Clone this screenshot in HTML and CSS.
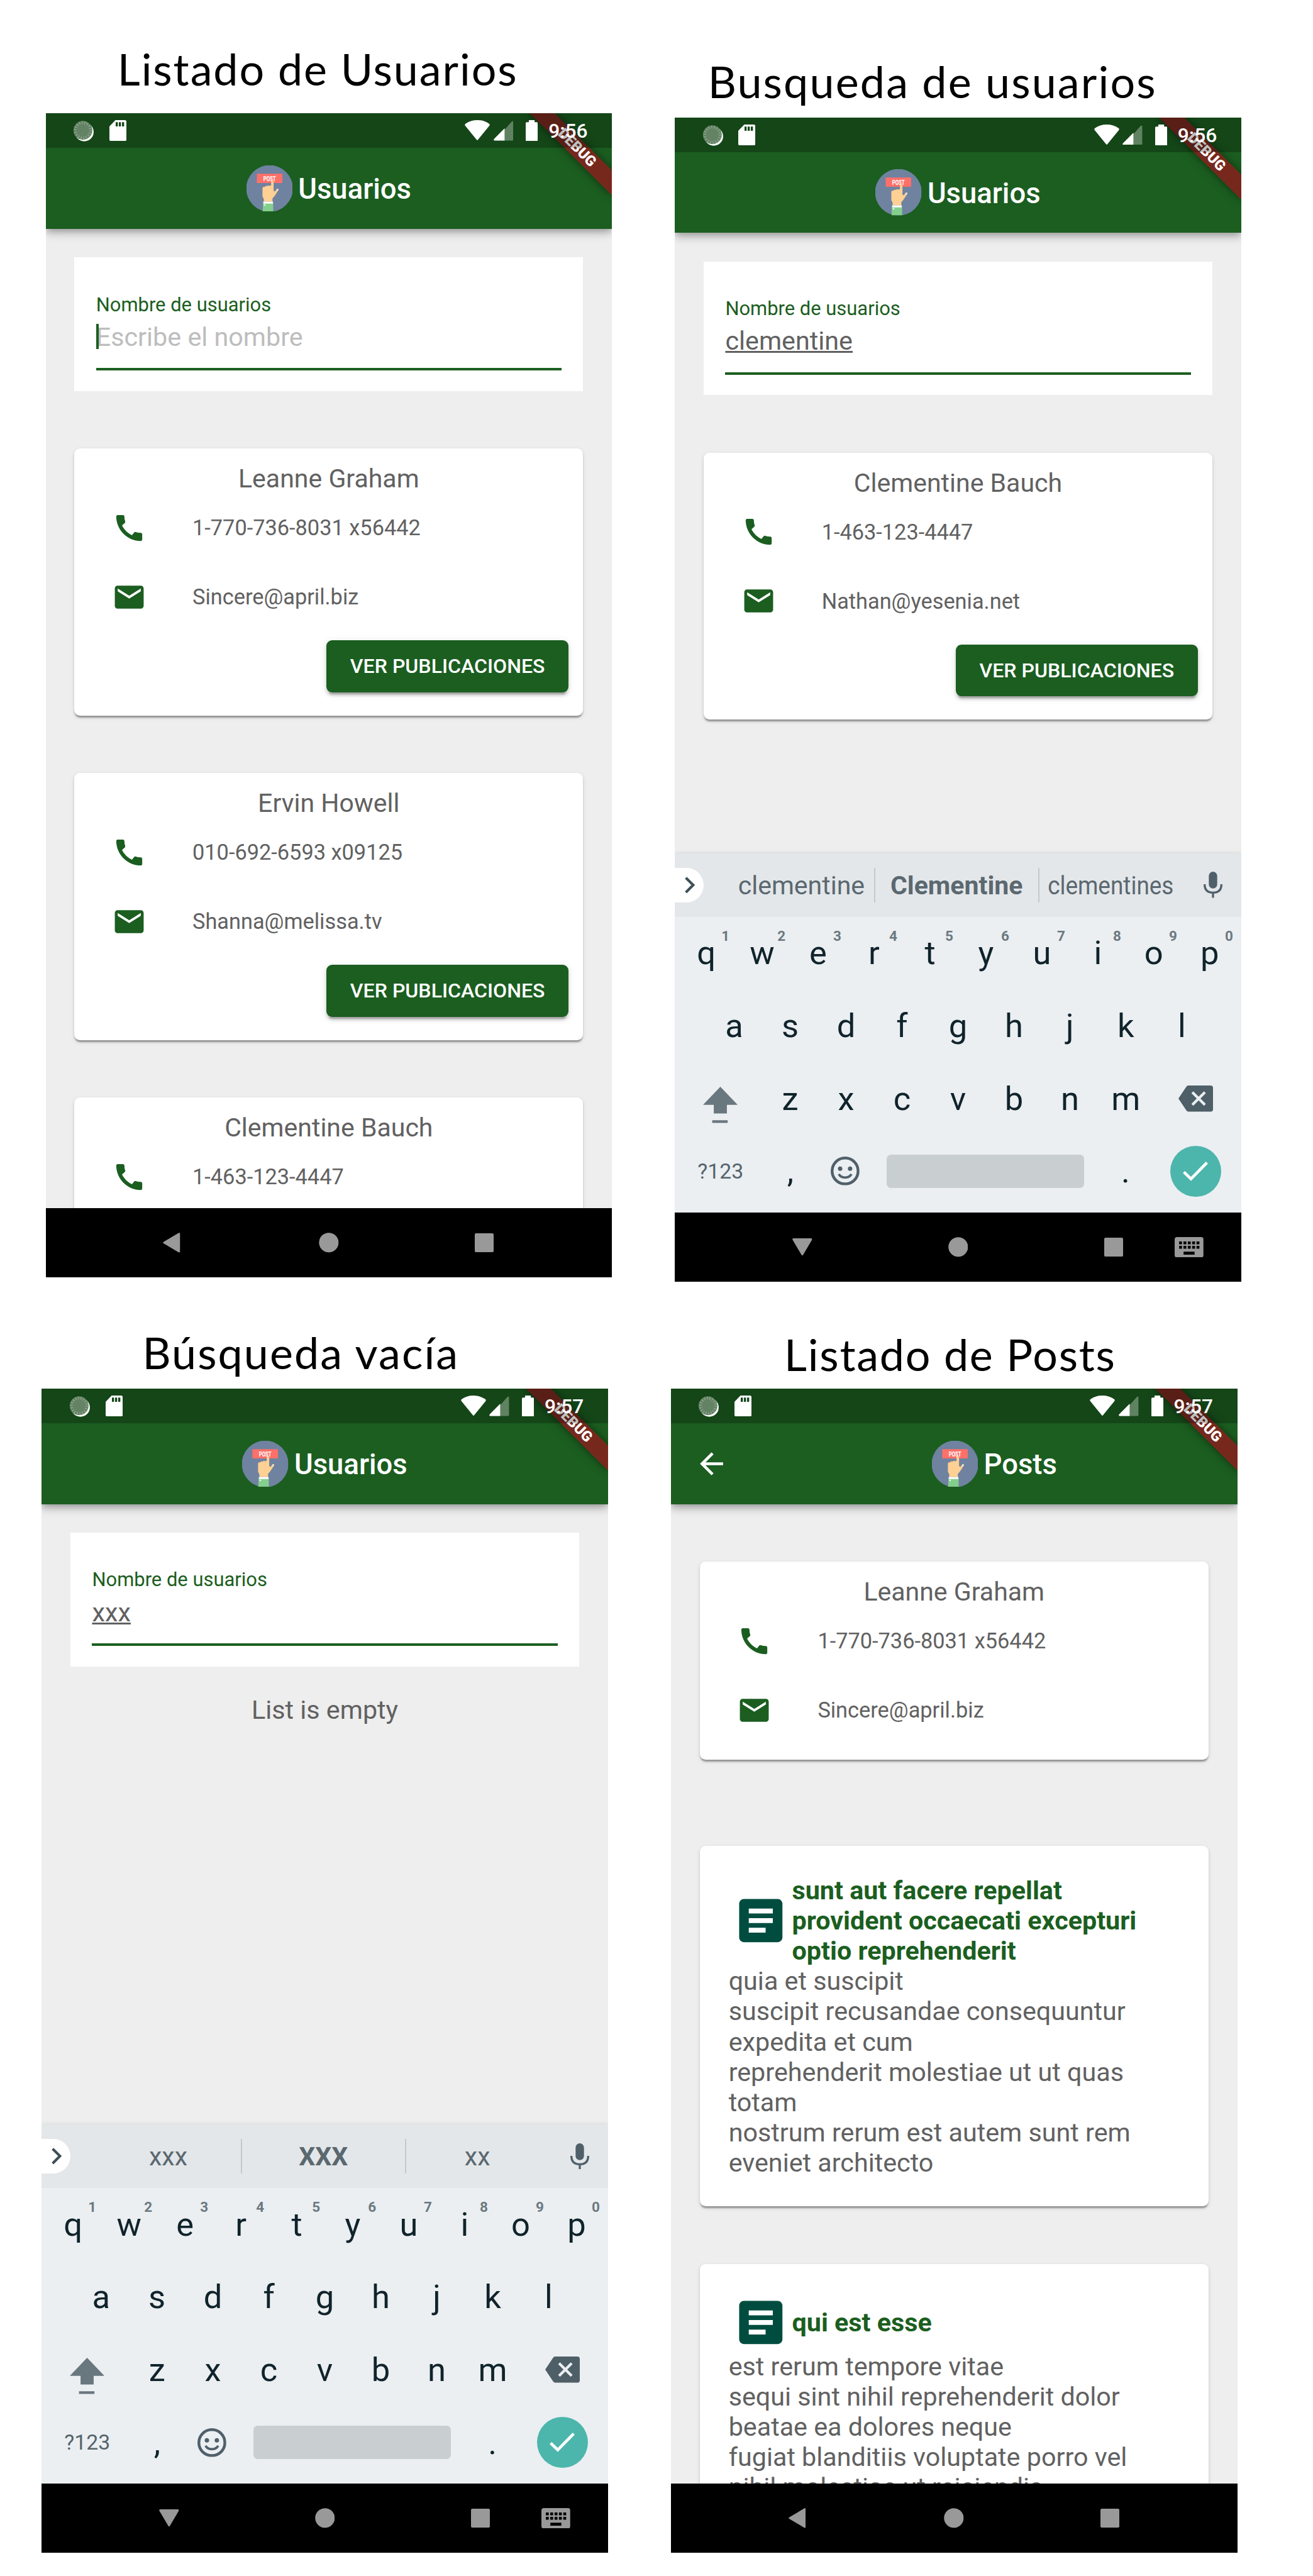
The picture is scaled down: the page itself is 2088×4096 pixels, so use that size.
FILE: index.html
```html
<!DOCTYPE html>
<html lang="es">
<head>
<meta charset="utf-8">
<title>Usuarios y Posts</title>
<link rel="stylesheet" href="styles.css">
</head>
<body>
<svg class="sprite" aria-hidden="true">
  <symbol id="i-sync" viewBox="0 0 40 42">
    <circle cx="21.5" cy="22.5" r="18" fill="#fff"/>
    <circle cx="19" cy="19.500" r="18" fill="#648264"/>
    <circle cx="19" cy="19.500" r="14.500" fill="none" stroke="#93aa93" stroke-width="5" stroke-dasharray="1.600 3.460"/>
  </symbol>
  <symbol id="i-sd" viewBox="0 0 32.500 40"><path fill="#fff" fill-rule="evenodd" d="M11.500 0H29.500Q32.500 0 32.500 3V37Q32.500 40 29.500 40H3Q0 40 0 37V12ZM12 4V12H16V4ZM18 4V12H22V4ZM24 4V12H28V4Z"/></symbol>
  <symbol id="i-wifi" viewBox="0 0 48 38.500"><path fill="#fff" d="M.8 10.500Q-.4 8.500 1.500 7Q11 0 24 0T46.500 7Q48.400 8.500 47.200 10.500L25.200 37.500Q24 39 22.800 37.500Z"/></symbol>
  <symbol id="i-signal" viewBox="0 0 38 38"><path fill="#5f8260" d="M21 17L34 2Q38-1 38 3V35.500Q38 38 35.500 38H21Z"/><path fill="#fff" d="M21 14.500V38H2Q-1 37.500 1 34.500Z"/></symbol>
  <symbol id="i-battery" viewBox="0 0 23 40"><path fill="#fff" d="M6 0H17V4H21Q23 4 23 6V38Q23 40 21 40H2Q0 40 0 38V6Q0 4 2 4H6Z"/></symbol>
  <symbol id="i-logo" viewBox="0 0 88 88">
    <circle cx="44" cy="44" r="44.500" fill="#6f82a0"/>
    <rect x="19.700" y="16" width="48.600" height="17.700" rx="1" fill="#ff7069"/>
    <text x="44" y="30" class="logo-text" text-anchor="middle" textLength="24" lengthAdjust="spacingAndGlyphs">POST</text>
    <path fill="#ffd093" d="M47 31Q49.300 26 51.700 31V48L54 50 58 45Q61 43.500 60.800 47L53.500 58.500 49.500 63V69H33V64L30.500 59.500V43Q32 39.500 34.500 41.500 36.500 37.500 39 40 41 36.500 43.500 39L47 38Z"/>
    <path fill="#f7ece0" d="M57.500 45.500Q60.500 43 61 46.500L59.500 49Z"/>
    <path fill="#84cf8e" d="M31.500 72H51V88H31Z"/>
    <rect x="32" y="69" width="18.500" height="3.800" fill="#fff"/>
    <circle cx="34.600" cy="75.500" r="1.700" fill="#e6f7e8"/>
  </symbol>
  <symbol id="i-back" viewBox="0 0 24 24"><path fill="#fff" d="M20 11H7.830l5.590-5.590L12 4l-8 8 8 8 1.410-1.410L7.830 13H20v-2z"/></symbol>
  <symbol id="i-phone" viewBox="0 0 24 24"><path fill="#1b5e20" d="M20.010 15.380c-1.230 0-2.420-.2-3.530-.56-.35-.12-.74-.03-1.010.24l-1.570 1.970c-2.830-1.350-5.480-3.900-6.890-6.830l1.950-1.660c.27-.28.350-.67.240-1.020-.37-1.110-.56-2.300-.56-3.530 0-.54-.45-.99-.99-.99H4.190C3.650 3 3 3.240 3 3.990 3 13.280 10.730 21 20.010 21c.71 0 .99-.63.99-1.180v-3.450c0-.54-.45-.99-.99-.99z"/></symbol>
  <symbol id="i-mail" viewBox="0 0 24 24"><path fill="#1b5e20" d="M20 4H4c-1.100 0-1.990.9-1.990 2L2 18c0 1.100.9 2 2 2h16c1.100 0 2-.9 2-2V6c0-1.100-.9-2-2-2zm0 4l-8 5-8-5V6l8 5 8-5v2z"/></symbol>
  <symbol id="i-article" viewBox="0 0 24 24"><path fill="#004d40" d="M19 3H5c-1.100 0-2 .9-2 2v14c0 1.100.9 2 2 2h14c1.100 0 2-.9 2-2V5c0-1.100-.9-2-2-2zm-5 14H7v-2h7v2zm3-4H7v-2h10v2zm0-4H7V7h10v2z"/></symbol>
  <symbol id="i-chevron" viewBox="0 0 20 32"><path fill="none" stroke="#3f4f57" stroke-width="5" d="M2 2L16 16 2 30"/></symbol>
  <symbol id="i-mic" viewBox="0 0 36 50"><rect x="10" y="0" width="16" height="32" rx="8" fill="#50606a"/><path fill="none" stroke="#50606a" stroke-width="4" d="M2 24Q2 40 18 40T34 24M18 40V50"/></symbol>
  <symbol id="i-shift" viewBox="0 0 66 70"><path fill="#69777e" d="M33 0L66 34.500H45.500V51H20.500V34.500H0ZM17.500 64H47V69H17.500Z"/></symbol>
  <symbol id="i-del" viewBox="0 0 66 50"><path fill="#4f5f68" d="M19 0H61Q66 0 66 5V45Q66 50 61 50H19Q16.500 50 15 47.500L0 25 15 2.500Q16.500 0 19 0Z"/><path stroke="#ebeff2" stroke-width="5" d="M26.500 13L50.500 37M50.500 13L26.500 37"/></symbol>
  <symbol id="i-smile" viewBox="0 0 55 55"><circle cx="27.500" cy="27.500" r="24.800" fill="none" stroke="#50606a" stroke-width="5.400"/><circle cx="18" cy="23" r="4.200" fill="#50606a"/><circle cx="37" cy="23" r="4.200" fill="#50606a"/><path fill="none" stroke="#50606a" stroke-width="4.600" d="M15.500 33.500Q19 40 27.500 40T39.500 33.500"/></symbol>
  <symbol id="i-check" viewBox="0 0 48 38"><path fill="none" stroke="#fff" stroke-width="5.500" d="M2 20L15.500 33 46 2"/></symbol>
  <symbol id="n-back" viewBox="0 0 33 38"><path fill="#999" d="M30 .6Q33-.8 33 3V35Q33 38.800 30 37.400L1.200 20.400Q-.6 19 1.200 17.600Z"/></symbol>
  <symbol id="n-down" viewBox="0 0 38 33"><path fill="#999" d="M.6 3Q-.8 0 3 0H35Q38.800 0 37.400 3L20.400 31.800Q19 33.600 17.600 31.800Z"/></symbol>
  <symbol id="n-home" viewBox="0 0 38 38"><circle cx="19" cy="19" r="18.700" fill="#999"/></symbol>
  <symbol id="n-recent" viewBox="0 0 36 36"><rect width="36" height="36" rx="2.500" fill="#999"/></symbol>
  <symbol id="n-kbd" viewBox="0 0 55 39"><rect width="55" height="39" rx="4.500" fill="#999"/><path stroke="#000" stroke-width="5.500" stroke-dasharray="5.500 2.800" d="M8.500 11H47.500M8.500 19.500H47.500"/><path fill="#000" d="M17 28H38V33.500H17Z"/></symbol>
</svg>

<main class="board">
  <section class="row row-top">
    <figure class="shot">
      <figcaption class="cap cap-1">Listado de Usuarios</figcaption>
      <div class="phone">
        <div class="appbar">
          <div class="title"><svg class="logo"><use href="#i-logo"/></svg><span>Usuarios</span></div>
        </div>
        <div class="debug">DEBUG</div>
        <div class="status">
          <svg class="s-sync"><use href="#i-sync"/></svg><svg class="s-sd"><use href="#i-sd"/></svg>
          <svg class="s-wifi"><use href="#i-wifi"/></svg><svg class="s-signal"><use href="#i-signal"/></svg><svg class="s-battery"><use href="#i-battery"/></svg><span class="clock">9:56</span>
        </div>
        <div class="content">
          <div class="search">
            <div class="label">Nombre de usuarios</div>
            <div class="input hint"><i class="cursor"></i>Escribe el nombre</div>
          </div>
          <div class="card">
            <h2>Leanne Graham</h2>
            <div class="item"><svg><use href="#i-phone"/></svg>1-770-736-8031 x56442</div>
            <div class="item"><svg><use href="#i-mail"/></svg>Sincere@april.biz</div>
            <div class="actions"><button>VER PUBLICACIONES</button></div>
          </div>
          <div class="card">
            <h2>Ervin Howell</h2>
            <div class="item"><svg><use href="#i-phone"/></svg>010-692-6593 x09125</div>
            <div class="item"><svg><use href="#i-mail"/></svg>Shanna@melissa.tv</div>
            <div class="actions"><button>VER PUBLICACIONES</button></div>
          </div>
          <div class="card">
            <h2>Clementine Bauch</h2>
            <div class="item"><svg><use href="#i-phone"/></svg>1-463-123-4447</div>
          </div>
        </div>
        <nav class="navbar"><svg class="n-back"><use href="#n-back"/></svg><svg class="n-home"><use href="#n-home"/></svg><svg class="n-recent"><use href="#n-recent"/></svg></nav>
      </div>
    </figure>

    <figure class="shot">
      <figcaption class="cap cap-2">Busqueda de usuarios</figcaption>
      <div class="phone">
        <div class="appbar">
          <div class="title"><svg class="logo"><use href="#i-logo"/></svg><span>Usuarios</span></div>
        </div>
        <div class="debug">DEBUG</div>
        <div class="status">
          <svg class="s-sync"><use href="#i-sync"/></svg><svg class="s-sd"><use href="#i-sd"/></svg>
          <svg class="s-wifi"><use href="#i-wifi"/></svg><svg class="s-signal"><use href="#i-signal"/></svg><svg class="s-battery"><use href="#i-battery"/></svg><span class="clock">9:56</span>
        </div>
        <div class="content">
          <div class="search">
            <div class="label">Nombre de usuarios</div>
            <div class="input"><u>clementine</u></div>
          </div>
          <div class="card">
            <h2>Clementine Bauch</h2>
            <div class="item"><svg><use href="#i-phone"/></svg>1-463-123-4447</div>
            <div class="item"><svg><use href="#i-mail"/></svg>Nathan@yesenia.net</div>
            <div class="actions"><button>VER PUBLICACIONES</button></div>
          </div>
        </div>
        <div class="keyboard">
          <div class="suggest">
            <div class="expand"><svg><use href="#i-chevron"/></svg></div>
            <span class="sug sug-a">clementine</span><b class="sug sug-b">Clementine</b><span class="sug sug-c"><span class="tight">clementines</span></span>
            <svg class="mic"><use href="#i-mic"/></svg>
          </div>
          <div class="keys">
            <div class="krow"><span>q<sup>1</sup></span><span>w<sup>2</sup></span><span>e<sup>3</sup></span><span>r<sup>4</sup></span><span>t<sup>5</sup></span><span>y<sup>6</sup></span><span>u<sup>7</sup></span><span>i<sup>8</sup></span><span>o<sup>9</sup></span><span>p<sup>0</sup></span></div>
            <div class="krow"><span>a</span><span>s</span><span>d</span><span>f</span><span>g</span><span>h</span><span>j</span><span>k</span><span>l</span></div>
            <div class="krow"><span class="wide"><svg class="shift"><use href="#i-shift"/></svg></span><span>z</span><span>x</span><span>c</span><span>v</span><span>b</span><span>n</span><span>m</span><span class="wide"><svg class="del"><use href="#i-del"/></svg></span></div>
            <div class="krow"><span class="wide sym">?123</span><span>,</span><span><svg class="smile"><use href="#i-smile"/></svg></span><span class="space"></span><span>.</span><span class="wide"><i class="enter"><svg><use href="#i-check"/></svg></i></span></div>
          </div>
        </div>
        <nav class="navbar"><svg class="n-down"><use href="#n-down"/></svg><svg class="n-home"><use href="#n-home"/></svg><svg class="n-recent"><use href="#n-recent"/></svg><svg class="n-kbd"><use href="#n-kbd"/></svg></nav>
      </div>
    </figure>
  </section>

  <section class="row row-bottom">
    <figure class="shot">
      <figcaption class="cap cap-3">Búsqueda vacía</figcaption>
      <div class="phone">
        <div class="appbar">
          <div class="title"><svg class="logo"><use href="#i-logo"/></svg><span>Usuarios</span></div>
        </div>
        <div class="debug">DEBUG</div>
        <div class="status">
          <svg class="s-sync"><use href="#i-sync"/></svg><svg class="s-sd"><use href="#i-sd"/></svg>
          <svg class="s-wifi"><use href="#i-wifi"/></svg><svg class="s-signal"><use href="#i-signal"/></svg><svg class="s-battery"><use href="#i-battery"/></svg><span class="clock">9:57</span>
        </div>
        <div class="content">
          <div class="search">
            <div class="label">Nombre de usuarios</div>
            <div class="input"><u>xxx</u></div>
          </div>
          <p class="empty">List is empty</p>
        </div>
        <div class="keyboard">
          <div class="suggest">
            <div class="expand"><svg><use href="#i-chevron"/></svg></div>
            <span class="sug sug-a">xxx</span><b class="sug sug-b">XXX</b><span class="sug sug-c">xx</span>
            <svg class="mic"><use href="#i-mic"/></svg>
          </div>
          <div class="keys">
            <div class="krow"><span>q<sup>1</sup></span><span>w<sup>2</sup></span><span>e<sup>3</sup></span><span>r<sup>4</sup></span><span>t<sup>5</sup></span><span>y<sup>6</sup></span><span>u<sup>7</sup></span><span>i<sup>8</sup></span><span>o<sup>9</sup></span><span>p<sup>0</sup></span></div>
            <div class="krow"><span>a</span><span>s</span><span>d</span><span>f</span><span>g</span><span>h</span><span>j</span><span>k</span><span>l</span></div>
            <div class="krow"><span class="wide"><svg class="shift"><use href="#i-shift"/></svg></span><span>z</span><span>x</span><span>c</span><span>v</span><span>b</span><span>n</span><span>m</span><span class="wide"><svg class="del"><use href="#i-del"/></svg></span></div>
            <div class="krow"><span class="wide sym">?123</span><span>,</span><span><svg class="smile"><use href="#i-smile"/></svg></span><span class="space"></span><span>.</span><span class="wide"><i class="enter"><svg><use href="#i-check"/></svg></i></span></div>
          </div>
        </div>
        <nav class="navbar"><svg class="n-down"><use href="#n-down"/></svg><svg class="n-home"><use href="#n-home"/></svg><svg class="n-recent"><use href="#n-recent"/></svg><svg class="n-kbd"><use href="#n-kbd"/></svg></nav>
      </div>
    </figure>

    <figure class="shot">
      <figcaption class="cap cap-4">Listado de Posts</figcaption>
      <div class="phone">
        <div class="appbar">
          <svg class="back"><use href="#i-back"/></svg>
          <div class="title"><svg class="logo"><use href="#i-logo"/></svg><span>Posts</span></div>
        </div>
        <div class="debug">DEBUG</div>
        <div class="status">
          <svg class="s-sync"><use href="#i-sync"/></svg><svg class="s-sd"><use href="#i-sd"/></svg>
          <svg class="s-wifi"><use href="#i-wifi"/></svg><svg class="s-signal"><use href="#i-signal"/></svg><svg class="s-battery"><use href="#i-battery"/></svg><span class="clock">9:57</span>
        </div>
        <div class="content posts">
          <div class="card profile">
            <h2>Leanne Graham</h2>
            <div class="item"><svg><use href="#i-phone"/></svg>1-770-736-8031 x56442</div>
            <div class="item"><svg><use href="#i-mail"/></svg>Sincere@april.biz</div>
          </div>
          <article class="card post">
            <header><svg><use href="#i-article"/></svg><h3>sunt aut facere repellat<br>provident occaecati excepturi<br>optio reprehenderit</h3></header>
            <p>quia et suscipit<br>suscipit recusandae consequuntur<br>expedita et cum<br>reprehenderit molestiae ut ut quas<br>totam<br>nostrum rerum est autem sunt rem<br>eveniet architecto</p>
          </article>
          <article class="card post">
            <header><svg><use href="#i-article"/></svg><h3>qui est esse</h3></header>
            <p>est rerum tempore vitae<br>sequi sint nihil reprehenderit dolor<br>beatae ea dolores neque<br>fugiat blanditiis voluptate porro vel<br>nihil molestiae ut reiciendis</p>
          </article>
        </div>
        <nav class="navbar"><svg class="n-back"><use href="#n-back"/></svg><svg class="n-home"><use href="#n-home"/></svg><svg class="n-recent"><use href="#n-recent"/></svg></nav>
      </div>
    </figure>
  </section>
</main>
</body>
</html>
```
FILE: styles.css
```css
/* 1rem = ten device pixels of the captured phones (1080 x 2220) */
html { font-size: 8.3387px; }
body { margin: 0; background: #fff; font-family: Roboto, "Noto Sans", sans-serif; overflow: hidden; }
svg { display: block; flex: none; }
.sprite { display: none; }
figure, h2, h3, p { margin: 0; font-weight: 400; }

.board { width: 250.4rem; height: 491.2rem; overflow: hidden; }
.row { display: flex; align-items: flex-start; gap: 12rem; }
.row-top { height: 244.4rem; padding-left: 8.7rem; }
.row-bottom { padding-left: 7.95rem; }
.shot { width: 108rem; }

.cap { box-sizing: border-box; color: #000; font: 8.4rem/10rem Lato, Carlito, sans-serif; white-space: nowrap; }
.cap-1 { height: 21.6rem; padding: 8.13rem 0 0 13.7rem; letter-spacing: .23rem; }
.cap-2 { height: 22.4rem; padding: 10.57rem 0 0 6.3rem; letter-spacing: .26rem; }
.cap-3 { height: 20.4rem; padding: 8.55rem 0 0 19.2rem; letter-spacing: .25rem; }
.cap-4 { height: 20.4rem; padding: 8.83rem 0 0 21.6rem; letter-spacing: .21rem; }

.phone { position: relative; display: flex; flex-direction: column; width: 108rem; height: 222rem; overflow: hidden; background: #eee; }

/* app bar, debug ribbon and the translucent status bar over both */
.appbar { flex: none; z-index: 1; box-sizing: border-box; display: flex; align-items: center; height: 22rem; padding-top: 6.6rem; background: #1b5e20; box-shadow: 0 .55rem 1.1rem -.27rem rgba(0,0,0,.2), 0 1.1rem 1.37rem rgba(0,0,0,.14), 0 .27rem 2.75rem rgba(0,0,0,.12); }
.back { width: 6.6rem; height: 6.6rem; margin: 0 4.4rem; }
.title { flex: 1; display: flex; justify-content: center; align-items: center; gap: 1.1rem; color: #fff; font-size: 5.45rem; line-height: 6.4rem; font-weight: 500; }
.title span { padding-top: .4rem; }
.logo { width: 8.8rem; height: 8.8rem; }
.logo-text { fill: #fff; font: 700 13px Roboto, sans-serif; }
.debug { position: absolute; z-index: 2; top: 7.7rem; left: 97rem; width: 22rem; height: 3.3rem; transform-origin: 11rem -7.7rem; transform: rotate(45deg); background: rgba(140,28,28,.82); box-shadow: 0 0 1.65rem rgba(0,0,0,.5); color: #fff; font-size: 2.8rem; line-height: 3.3rem; font-weight: 900; text-align: center; }
.status { position: absolute; z-index: 3; inset: 0 0 auto 0; box-sizing: border-box; display: flex; height: 6.6rem; padding: 1.29rem 4.4rem 0 5.2rem; background: rgba(0,0,0,.25); }
.s-sync { width: 4rem; height: 4.2rem; }
.s-sd { width: 3.25rem; height: 4rem; margin-left: 2.95rem; }
.s-wifi { width: 4.8rem; height: 3.85rem; margin-left: auto; }
.s-signal { width: 3.8rem; height: 3.8rem; margin: .15rem 0 0 .7rem; }
.s-battery { width: 2.3rem; height: 4rem; margin-left: 2.4rem; }
.clock { width: 7.7rem; margin-left: 2rem; color: #fff; font-size: 3.8rem; line-height: 4.2rem; font-weight: 500; white-space: nowrap; }

.content { flex: 1; min-height: 0; overflow: hidden; display: flex; flex-direction: column; gap: 11rem; padding: 5.5rem 5.5rem 0; }
.posts { padding-top: 11rem; }
.search { flex: none; box-sizing: border-box; height: 25.44rem; padding: 6.85rem 4.12rem 0; background: #fff; }
.label { color: #1b5e20; font-size: 3.71rem; line-height: 4.4rem; }
.input { position: relative; box-sizing: border-box; height: 10.3rem; padding-top: 1rem; border-bottom: .55rem solid #1b5e20; color: #616161; font-size: 4.95rem; line-height: 5.8rem; }
.input.hint { color: #bdbdbd; }
.input u { text-decoration-thickness: .3rem; text-underline-offset: .25rem; }
.cursor { position: absolute; left: 0; top: 1.4rem; width: .55rem; height: 4.8rem; background: #1b5e20; }

.card { flex: none; box-sizing: border-box; height: 50.88rem; border-radius: 1.1rem; background: #fff; color: #616161; box-shadow: 0 .55rem .27rem -.27rem rgba(0,0,0,.2), 0 .27rem .27rem rgba(0,0,0,.14), 0 .27rem .8rem rgba(0,0,0,.12); }
.card h2 { box-sizing: border-box; height: 8.5rem; padding-top: 3rem; font-size: 4.92rem; line-height: 5.75rem; text-align: center; }
.item { display: flex; align-items: center; gap: 8.75rem; height: 13.2rem; padding-left: 7.15rem; font-size: 4.12rem; }
.item svg { width: 6.6rem; height: 6.6rem; }
.actions { display: flex; justify-content: flex-end; padding: 1.65rem 2.75rem 0; }
button { width: 46.2rem; height: 9.9rem; padding: 0; border: 0; border-radius: 1.1rem; background: #1b5e20; color: #fff; font: 500 3.85rem Roboto, sans-serif; box-shadow: 0 .82rem .27rem -.55rem rgba(0,0,0,.2), 0 .55rem .55rem rgba(0,0,0,.14), 0 .27rem 1.37rem rgba(0,0,0,.12); }
.profile { height: 37.7rem; margin-bottom: 5.5rem; }
.post { height: auto; padding: 5.6rem 5.5rem 5.4rem; font-size: 4.95rem; line-height: 5.775rem; white-space: nowrap; }
.post header { display: flex; align-items: center; gap: .5rem; }
.post header svg { width: 11rem; height: 11rem; margin-left: .6rem; }
.post h3 { color: #1b5e20; font-size: 4.95rem; font-weight: 700; }
.empty { margin-top: -5.5rem; font-size: 4.95rem; line-height: 5.8rem; color: #616161; text-align: center; }

.keyboard { flex: none; height: 68.5rem; display: flex; flex-direction: column; background: #ebeff2; box-shadow: 0 0 .8rem rgba(0,0,0,.12); }
.suggest { position: relative; display: flex; align-items: center; height: 12.1rem; background: #e3e7ea; color: #5b686f; font-size: 4.92rem; }
.expand { display: flex; align-items: center; justify-content: flex-end; box-sizing: border-box; width: 5.5rem; height: 6.6rem; padding-right: 1.6rem; border-radius: 0 3.3rem 3.3rem 0; background: #fff; }
.expand svg { width: 2rem; height: 3.2rem; }
.sug { display: flex; justify-content: center; align-items: center; height: 6.6rem; box-sizing: border-box; padding-top: .2rem; white-space: nowrap; }
.sug-a { width: 32.7rem; padding-left: 4.8rem; border-right: .3rem solid #c4c9cc; }
.sug-b { width: 31.3rem; border-right: .3rem solid #c4c9cc; }
.sug-c { width: 27.2rem; }
.tight { transform: scaleX(.9); }
.mic { width: 3.6rem; height: 5rem; margin-left: 4.1rem; }
.keys { flex: 1; padding: 0 .65rem; color: #10232b; font-size: 6.3rem; }
.krow { display: flex; justify-content: center; height: 13.87rem; }
.krow > span { position: relative; display: flex; align-items: center; justify-content: center; width: 10.67rem; }
.krow > .wide { width: 16rem; }
.krow sup { position: absolute; top: 2.1rem; left: 8.1rem; width: 1.8rem; color: #6b7980; font-size: 2.7rem; line-height: 3.2rem; font-weight: 700; text-align: center; }
.shift { width: 6.6rem; height: 7rem; margin-top: 2.4rem; }
.del { width: 6.6rem; height: 5rem; }
.krow > .sym { color: #55646c; font-size: 4.05rem; }
.smile { width: 5.5rem; height: 5.5rem; margin-right: .4rem; }
.krow > .space { width: 37.6rem; height: 6.35rem; margin: auto 2.6rem auto 2.4rem; border-radius: .8rem; background: #c9ced1; }
.enter { display: flex; align-items: center; justify-content: center; width: 9.7rem; height: 9.7rem; border-radius: 50%; background: #4db6ac; }
.enter svg { width: 4.8rem; height: 3.8rem; }

.navbar { flex: none; z-index: 1; position: relative; box-sizing: border-box; display: flex; align-items: center; height: 13.2rem; padding-left: 22.4rem; background: #000; }
.n-back { width: 3.3rem; height: 3.8rem; margin-right: .3rem; }
.n-down { width: 3.8rem; height: 3.3rem; margin-right: -.2rem; }
.n-home { width: 3.8rem; height: 3.8rem; margin-left: 26.1rem; }
.n-recent { width: 3.6rem; height: 3.6rem; margin-left: 26rem; }
.n-kbd { width: 5.5rem; height: 3.9rem; margin-left: 9.85rem; }
```
